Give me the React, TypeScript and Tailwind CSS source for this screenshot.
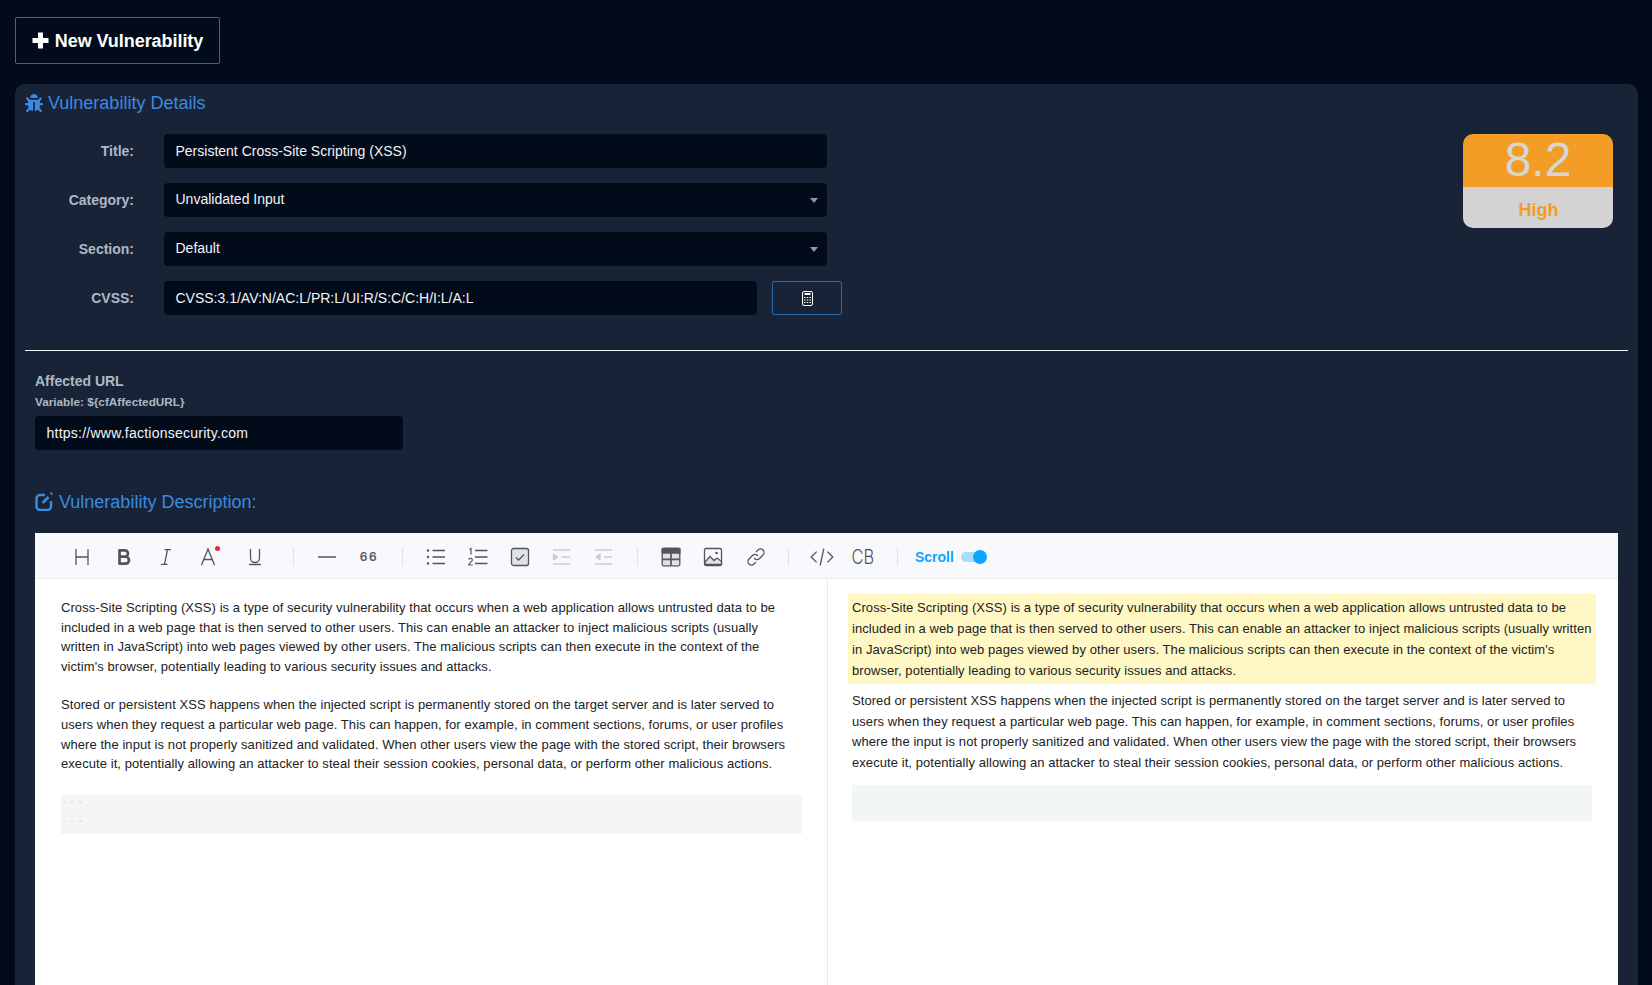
import type { ReactNode } from 'react';
import { FaBug } from 'react-icons/fa';

const para1 =
  "Cross-Site Scripting (XSS) is a type of security vulnerability that occurs when a web application allows untrusted data to be included in a web page that is then served to other users. This can enable an attacker to inject malicious scripts (usually written in JavaScript) into web pages viewed by other users. The malicious scripts can then execute in the context of the victim's browser, potentially leading to various security issues and attacks.";
const para2 =
  'Stored or persistent XSS happens when the injected script is permanently stored on the target server and is later served to users when they request a particular web page. This can happen, for example, in comment sections, forums, or user profiles where the input is not properly sanitized and validated. When other users view the page with the stored script, their browsers execute it, potentially allowing an attacker to steal their session cookies, personal data, or perform other malicious actions.';

function FieldRow({ label, children }: { label: string; children: ReactNode }) {
  return (
    <div className="flex h-[34px] items-center">
      <label className="w-[109px] text-right text-sm font-bold text-[#aeb8c4]">{label}</label>
      <div className="ml-[30px] flex items-center">{children}</div>
    </div>
  );
}

function TextBox({ value, width, select, className }: { value: string; width: string; select?: boolean; className?: string }) {
  return (
    <div className={`relative flex h-[34px] items-center rounded-[4px] bg-[#020b1a] px-[11.5px] text-sm text-[#f2f4f7] ${select ? 'pb-[2px]' : ''} ${width} ${className ?? ''}`}>
      {value}
      {select && (
        <span className="absolute right-[9px] top-[15px] h-0 w-0 border-x-4 border-t-[5px] border-x-transparent border-t-[#8f97a3]" />
      )}
    </div>
  );
}

function ToolBtn({ w = 'w-[42px]', children }: { w?: string; children: ReactNode }) {
  return <div className={`flex shrink-0 items-center justify-center ${w}`}>{children}</div>;
}

function Sep({ className }: { className: string }) {
  return <div className={`h-[18px] w-px shrink-0 bg-[#dfe2e8] ${className}`} />;
}

function Ico({ children, size = 20 }: { children: ReactNode; size?: number }) {
  return (
    <svg width={size} height={size} viewBox="0 0 20 20" fill="none" stroke="#555" strokeWidth="1.3">
      {children}
    </svg>
  );
}

function Toolbar() {
  return (
    <div className="flex h-[46px] items-center border-b border-[#e8eaf0] bg-[#f8f9fc] pl-[26px] pt-[2px]">
      <ToolBtn>
        <Ico><path d="M4 2v16M16 2v16M4 10h12" /></Ico>
      </ToolBtn>
      <ToolBtn>
        <Ico><path d="M5.500 3.300h5.300a3.200 3.200 0 0 1 0 6.400H5.500zM5.500 9.700h6a3.500 3.500 0 0 1 0 7h-6z" strokeWidth="2.700" strokeLinejoin="round" /></Ico>
      </ToolBtn>
      <ToolBtn>
        <Ico><path d="M8.500 2.600H15M5 17.400h6.500M11.500 2.600L8.500 17.400" /></Ico>
      </ToolBtn>
      <ToolBtn w="w-[47px]">
        <div className="relative -ml-[5px] h-5 w-5">
          <Ico><path d="M3.500 18L10 2l6.500 16M5.800 12.500h8.400" /></Ico>
          <span className="absolute -right-[2px] top-[-1px] h-[5px] w-[5px] rounded-full bg-[#f5222d]" />
        </div>
      </ToolBtn>
      <ToolBtn>
        <Ico><path d="M5.500 2v9a4.500 4.500 0 0 0 9 0V2M4 17.500h12" /></Ico>
      </ToolBtn>
      <Sep className="ml-[17px] mr-[12px]" />
      <ToolBtn>
        <Ico><path d="M1 10h18" strokeWidth="1.500" /></Ico>
      </ToolBtn>
      <ToolBtn>
        <span className="font-['Inter',sans-serif] text-[12px] font-semibold tracking-[1.5px] text-[#555]">66</span>
      </ToolBtn>
      <Sep className="mx-[12px]" />
      <ToolBtn>
        <Ico>
          <path d="M6.500 3.500h12.500M6.500 10h12.500M6.500 16.500h12.500" />
          <circle cx="2" cy="3.500" r="1.200" fill="#555" stroke="none" />
          <circle cx="2" cy="10" r="1.200" fill="#555" stroke="none" />
          <circle cx="2" cy="16.500" r="1.200" fill="#555" stroke="none" />
        </Ico>
      </ToolBtn>
      <ToolBtn>
        <Ico>
          <path d="M7 3.500h12.500M7 10h12.500M7 16.500h12.500" />
          <path d="M1.500 2.500L3 1.500v6M0.700 12.500c.5-1.600 3.700-1.400 3.700.5 0 1.400-3.400 3-3.700 5h4" strokeWidth="1.200" />
        </Ico>
      </ToolBtn>
      <ToolBtn>
        <Ico>
          <rect x="1.500" y="1.500" width="17" height="17" rx="2" fill="#dfe2e8" />
          <path d="M6 10.500l2.600 2.600L14 7.500" />
        </Ico>
      </ToolBtn>
      <ToolBtn>
        <Ico>
          <g stroke="#ccc">
            <path d="M1 3h17M9.500 10H18M1 17h17" />
            <path d="M1.500 7.200l4 2.800-4 2.800z" fill="#ccc" />
          </g>
        </Ico>
      </ToolBtn>
      <ToolBtn>
        <Ico>
          <g stroke="#ccc">
            <path d="M1 3h17M10 10h8M1 17h17" />
            <path d="M6 7.200L2 10l4 2.800z" fill="#ccc" />
          </g>
        </Ico>
      </ToolBtn>
      <Sep className="ml-[12px] mr-[12px]" />
      <ToolBtn>
        <Ico>
          <rect x="1.200" y="1.200" width="17.600" height="17.600" rx="1.500" fill="#dfe2e8" />
          <path d="M1.200 1.600h17.600v4.400H1.200z" fill="#555" />
          <path d="M10 6v12.500M1.200 12.300h17.600" strokeWidth="1.700" />
        </Ico>
      </ToolBtn>
      <ToolBtn>
        <Ico>
          <rect x="1.500" y="1.500" width="17" height="17" rx="1.500" />
          <path d="M2 15l5-5.500 4 4 3-2.500 4.500 3.500v3H2z" fill="#dfe2e8" />
          <circle cx="13.500" cy="6" r="1.300" fill="#555" stroke="none" />
        </Ico>
      </ToolBtn>
      <ToolBtn w="w-[43px]">
        <Ico>
          <path d="M8.500 11.500a3.500 3.500 0 0 0 5 0l3.500-3.500a3.500 3.500 0 0 0-5-5L10.500 4.500" strokeLinecap="round" />
          <path d="M11.500 8.500a3.500 3.500 0 0 0-5 0L3 12a3.500 3.500 0 0 0 5 5l1.500-1.500" strokeLinecap="round" />
        </Ico>
      </ToolBtn>
      <Sep className="ml-[11px] mr-[12px]" />
      <ToolBtn>
        <Ico size={24}>
          <path d="M5.500 5.500L1 10l4.500 4.500M14.500 5.500L19 10l-4.500 4.500M11.500 3L8.500 17" strokeWidth="1.100" />
        </Ico>
      </ToolBtn>
      <ToolBtn>
        <span className="-ml-[2px] inline-block scale-x-[0.82] font-['Inter',sans-serif] text-[20px] font-light leading-none text-[#555]">CB</span>
      </ToolBtn>
      <Sep className="ml-[12px] mr-[17px]" />
      <span className="font-['Liberation_Sans',sans-serif] text-sm font-bold text-[#0ea5ff]">Scroll</span>
      <div className="relative ml-[7px] h-[10px] w-[24px] rounded-full bg-[#a9dcfb]">
        <span className="absolute -right-[2px] -top-[2px] h-[14px] w-[14px] rounded-full bg-[#0ea5ff]" />
      </div>
    </div>
  );
}

export default function App() {
  return (
    <div className="h-[985px] overflow-hidden bg-[#020b1a] pl-[15px] pr-[14px] pt-[17px] font-['Liberation_Sans',Arial,sans-serif]">
      <button className="flex h-[47px] w-[205px] items-center justify-center gap-[6px] rounded-[2px] border border-[#2a6aa8] text-lg font-bold text-white">
        <svg width="17" height="17" viewBox="0 0 17 17" fill="none" stroke="currentColor" strokeWidth="5">
          <path d="M8.500 0.500v16M0.500 8.500h16" />
        </svg>
        <span className="tracking-[-0.05px]">New Vulnerability</span>
      </button>

      <section className="mt-[20px] h-[1000px] rounded-[10px] bg-[#192337] px-[10px]">
        <h2 className="flex h-[38px] items-center gap-[5px] text-lg text-[#3a8ae0]">
          <FaBug className="h-[18px] w-[18px]" />
          Vulnerability Details
        </h2>

        <div className="mt-[12px] flex justify-between">
          <div className="flex flex-col gap-[15px]">
            <FieldRow label="Title:">
              <TextBox value="Persistent Cross-Site Scripting (XSS)" width="w-[663px]" />
            </FieldRow>
            <FieldRow label="Category:">
              <TextBox value="Unvalidated Input" width="w-[663px]" select />
            </FieldRow>
            <FieldRow label="Section:">
              <TextBox value="Default" width="w-[663px]" select />
            </FieldRow>
            <FieldRow label="CVSS:">
              <TextBox value="CVSS:3.1/AV:N/AC:L/PR:L/UI:R/S:C/C:H/I:L/A:L" width="w-[593px]" />
              <button className="ml-[15px] flex h-[34px] w-[70px] items-center justify-center rounded-[2px] border border-[#2a6aa8] text-white">
                <svg width="11" height="15" viewBox="0 0 11 15" fill="none" stroke="currentColor">
                  <rect x="0.500" y="0.500" width="10" height="14" rx="1.500" />
                  <path d="M2.500 3h6" strokeWidth="2" />
                  <path d="M2 6.500h7M2 9h7M2 11.500h7" strokeWidth="1.200" strokeDasharray="1.500 1.250" />
                </svg>
              </button>
            </FieldRow>
          </div>
          <div className="mr-[15px] h-[94px] w-[150px] overflow-hidden rounded-[10px] text-center">
            <div className="flex h-[53px] items-center justify-center bg-[#f39c26] pb-[2px] text-5xl text-[#d6d6d6]">8.2</div>
            <div className="flex h-[41px] items-center justify-center bg-[#d3d3d3] pl-[1px] pt-[5px] text-lg font-bold text-[#f39c26]">High</div>
          </div>
        </div>

        <hr className="mt-[35px] border-t border-[#f2f4f7]" />

        <div className="px-[10px]">
          <div className="mt-[22px] text-sm font-bold leading-[16px] text-[#aeb8c4]">Affected URL</div>
          <div className="mt-[6px] text-[11.75px] font-bold leading-[14px] text-[#aeb8c4]">Variable: {'${cfAffectedURL}'}</div>
          <div className="mt-[7px]">
            <TextBox value="https://www.factionsecurity.com" width="w-[368px]" className="tracking-[0.24px]" />
          </div>

          <h2 className="mt-[40px] flex h-[24px] items-center gap-[6px] text-lg text-[#3a8ae0]">
            <svg width="18" height="19" viewBox="0 0 18 19" fill="none" stroke="currentColor" strokeWidth="2.500" className="-mt-[2px]">
              <path d="M10 3H5a3.500 3.500 0 0 0-3.500 3.500v8A3.500 3.500 0 0 0 5 18h7.500a3.500 3.500 0 0 0 3.500-3.500V9" />
              <path d="M7.500 11l6-6" strokeWidth="2.600" />
              <path d="M15.500 0.500l2 2" strokeWidth="1.800" />
            </svg>
            Vulnerability Description:
          </h2>

          <div className="mt-[19px] h-[600px] bg-white">
            <Toolbar />
            <div className="flex h-full text-[13px] tracking-[0.07px] text-[#222]">
              <div className="w-[793px] shrink-0 border-r border-[#e8eaf0] pl-[26px] pr-[25px] pt-[19px] leading-[19.6px]">
                <p className="pr-[4px]">{para1}</p>
                <p className="mt-[19px]">{para2}</p>
                <div className="mt-[21px] h-[39px] bg-[#f4f5f7] pt-[2px] font-['Liberation_Mono',monospace] text-[11px] leading-[20px] tracking-[1.5px] text-[#ccc]">
                  <div>```</div>
                  <div className="-mt-[1px]">```</div>
                </div>
              </div>
              <div className="flex-1 pl-[20px] pr-[22px] pt-[15px] leading-[21px]">
                <p className="bg-[#fff8c5] px-[4px] py-[3px]">{para1}</p>
                <p className="mt-[7px] pl-[4px] pr-[4px] leading-[20.7px]">{para2}</p>
                <div className="ml-[4px] mr-[4px] mt-[11px] h-[36px] bg-[#f3f6f7]" />
              </div>
            </div>
          </div>
        </div>
      </section>
    </div>
  );
}
